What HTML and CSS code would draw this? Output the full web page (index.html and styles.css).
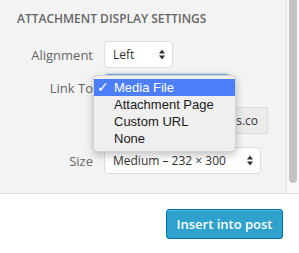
FILE: index.html
```html
<!doctype html>
<html lang="en">
<head>
  <meta charset="UTF-8">
  <meta name="viewport" content="width=device-width, initial-scale=1.0">
  <title>Attachment Display Settings</title>
  <link rel="stylesheet" href="styles.css">
</head>
<body>
  <div class="frame">
    <div class="sidebar-wrap">
      <div class="sidebar">
        <h3 class="sidebar-title">Attachment Display Settings</h3>

        <div class="settings">
          <label class="setting-label">Alignment</label>
          <div class="fake-select select-align">
            <span>Left</span>
            <svg class="arrows" width="6" height="11" viewBox="0 0 6 11"><path d="M0 4.5 3 0.5 6 4.5Z M0 6.5 3 10.5 6 6.5Z" fill="#333"/></svg>
          </div>

          <label class="setting-label">Link To</label>
          <!-- covered by the open popup below -->
          <div class="fake-select select-link is-focused"></div>

          <span></span>
          <div class="url-field">
            <span>http://sample.wpbooks.co</span>
          </div>

          <label class="setting-label label-size">Size</label>
          <div class="fake-select select-size">
            <span>Medium – 232 × 300</span>
            <svg class="arrows" width="6" height="11" viewBox="0 0 6 11"><path d="M0 4.5 3 0.5 6 4.5Z M0 6.5 3 10.5 6 6.5Z" fill="#333"/></svg>
          </div>
        </div>

        <!-- native popup menu of the Link To select, open over the form -->
        <ul class="popup-menu">
          <li class="popup-item is-selected"><span class="check">✓</span>Media File</li>
          <li class="popup-item">Attachment Page</li>
          <li class="popup-item">Custom URL</li>
          <li class="popup-item">None</li>
        </ul>
      </div>
      <div class="scroll-track">
        <div class="scroll-thumb"></div>
      </div>
    </div>

    <div class="toolbar">
      <button class="button-primary">Insert into post</button>
    </div>
  </div>
</body>
</html>
```

FILE: styles.css
```css
* {
  box-sizing: border-box;
}

body {
  margin: 0;
  font-family: 'Open Sans', sans-serif;
  background-color: #fff;
}

.frame {
  width: 299px;
  height: 253px;
  display: flex;
  flex-direction: column;
}

.sidebar-wrap {
  height: 194px;
  display: flex;
  border-bottom: 1px solid #dddddd;
}

.sidebar {
  position: relative;
  flex: 1;
  background-color: #f3f3f3;
  border-right: 1px solid #e4e4e4;
  padding: 11px 0 0 17px;
  overflow: hidden;
}

.sidebar-title {
  margin: 0;
  font-size: 12px;
  line-height: 16px;
  font-weight: 600;
  text-transform: uppercase;
  color: #666;
}

.settings {
  margin-top: 14px;
  display: grid;
  grid-template-columns: 76px auto;
  column-gap: 11px;
  row-gap: 6px;
  align-items: center;
}

.setting-label {
  text-align: right;
  font-size: 13px;
  color: #666;
}

.fake-select,
.url-field {
  height: 27px;
  display: flex;
  align-items: center;
  justify-content: space-between;
  padding: 0 8px;
  font-size: 12px;
  color: #333;
  background-color: #fff;
  border: 1px solid #dddddd;
  border-radius: 4px;
  white-space: nowrap;
}

.select-align {
  width: 69px;
}

.select-link {
  width: 126px;
}

.select-link.is-focused {
  border-color: #7aa7d9;
  box-shadow: 0 0 2px rgba(30, 140, 190, 0.6);
}

.url-field {
  width: 164px;
  justify-content: flex-end;
  overflow: hidden;
  padding-right: 9px;
  background-color: #ebebeb;
  border-radius: 0;
}

.select-size {
  width: 157px;
  margin-top: 7px;
}

.label-size {
  margin-top: 7px;
}

.arrows {
  flex: none;
  margin-right: -1px;
}

.popup-menu {
  position: absolute;
  left: 93px;
  top: 75px;
  width: 143px;
  height: 77px;
  margin: 0;
  padding: 3px 0 0;
  list-style: none;
  background-color: #efefef;
  border: 1px solid rgba(0, 0, 0, 0.12);
  border-radius: 5px;
  box-shadow: 0 3px 8px rgba(0, 0, 0, 0.25);
  font-family: 'Liberation Sans', Arial, sans-serif;
  font-size: 13px;
}

.popup-item {
  position: relative;
  height: 17px;
  line-height: 17px;
  padding-left: 20px;
  color: #1a1a1a;
}

.popup-item.is-selected {
  background-color: #4c7ef7;
  color: #fff;
}

.check {
  position: absolute;
  left: 3px;
  top: 0;
  font-family: 'DejaVu Sans', sans-serif;
  font-size: 14px;
  font-weight: bold;
}

.scroll-track {
  width: 12px;
  background-color: #fafafa;
  padding-left: 2px;
}

.scroll-thumb {
  width: 8px;
  height: 183px;
  background-color: #c2c2c2;
  border-radius: 0 0 4px 4px;
}

.toolbar {
  flex: 1;
  display: flex;
  justify-content: flex-end;
  align-items: flex-start;
  padding: 15px 16px 0 0;
}

.button-primary {
  height: 30px;
  width: 117px;
  padding: 0;
  font-family: 'Open Sans', sans-serif;
  font-size: 13px;
  font-weight: 600;
  color: #fff;
  background-color: #2ea2cc;
  border: 1px solid #0074a2;
  border-radius: 3px;
  box-shadow: inset 0 1px 0 rgba(120, 200, 230, 0.5);
}
```
